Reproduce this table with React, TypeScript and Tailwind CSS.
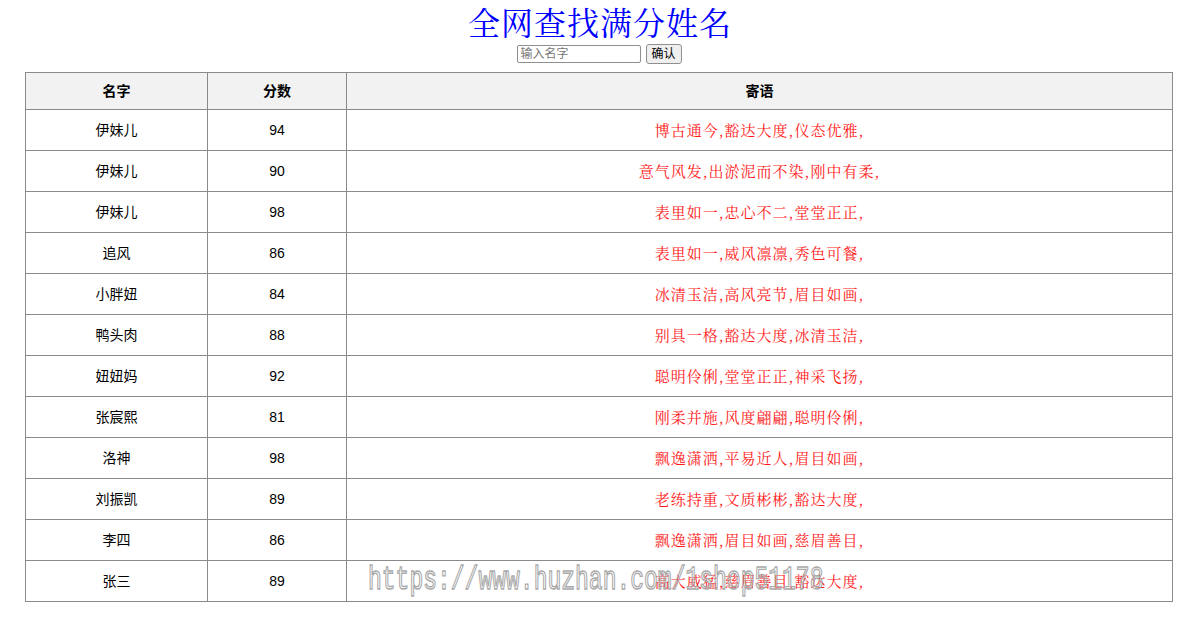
import { useState } from 'react';

interface Row {
  name: string;
  score: number;
  words: string;
}

const rows: Row[] = [
  { name: '伊妹儿', score: 94, words: '博古通今,豁达大度,仪态优雅,' },
  { name: '伊妹儿', score: 90, words: '意气风发,出淤泥而不染,刚中有柔,' },
  { name: '伊妹儿', score: 98, words: '表里如一,忠心不二,堂堂正正,' },
  { name: '追风', score: 86, words: '表里如一,威风凛凛,秀色可餐,' },
  { name: '小胖妞', score: 84, words: '冰清玉洁,高风亮节,眉目如画,' },
  { name: '鸭头肉', score: 88, words: '别具一格,豁达大度,冰清玉洁,' },
  { name: '妞妞妈', score: 92, words: '聪明伶俐,堂堂正正,神采飞扬,' },
  { name: '张宸熙', score: 81, words: '刚柔并施,风度翩翩,聪明伶俐,' },
  { name: '洛神', score: 98, words: '飘逸潇洒,平易近人,眉目如画,' },
  { name: '刘振凯', score: 89, words: '老练持重,文质彬彬,豁达大度,' },
  { name: '李四', score: 86, words: '飘逸潇洒,眉目如画,慈眉善目,' },
  { name: '张三', score: 89, words: '高大威猛,慈眉善目,豁达大度,' },
];

const App = () => {
  const [query, setQuery] = useState('');

  return (
    <div className="relative w-[1200px] h-[628px] bg-white overflow-hidden font-['Liberation_Sans','Noto_Sans_CJK_SC',sans-serif] text-black">
      {/* Title */}
      <h1 className="text-center text-[32px] leading-[42px] text-[#0000ff] font-['Noto_Serif_CJK_SC','Noto_Sans_CJK_SC',serif] tracking-[1px]">
        全网查找满分姓名
      </h1>

      {/* Search */}
      <div className="flex justify-center items-center gap-[5px] h-[24px] pr-[2px]">
        <input
          value={query}
          onChange={(e) => setQuery(e.target.value)}
          placeholder="输入名字"
          className="w-[124px] h-[18px] border border-[#8f8f8f] rounded-[2px] px-[3px] text-[12px] leading-[16px] placeholder:text-[#777]"
        />
        <button className="w-[36px] h-[20px] border border-[#8f8f8f] rounded-[3px] bg-[#efefef] text-[12px] leading-[18px]">
          确认
        </button>
      </div>

      {/* Table */}
      <div className="ml-[25px] mt-[6px] w-[1148px]">
        <table className="w-full border-collapse border border-[#8a8a8a] text-[14px]">
          <thead>
            <tr className="h-[37px] bg-[#f2f2f2]">
              <th className="w-[182px] border border-[#8a8a8a] font-bold">名字</th>
              <th className="w-[139px] border border-[#8a8a8a] font-bold">分数</th>
              <th className="border border-[#8a8a8a] font-bold">寄语</th>
            </tr>
          </thead>
          <tbody>
            {rows.map((row, i) => (
              <tr key={i} className="h-[41px]">
                <td className="border border-[#8a8a8a] text-center">{row.name}</td>
                <td className="border border-[#8a8a8a] text-center">{row.score}</td>
                <td className="border border-[#8a8a8a] text-center text-[15px] tracking-[1px] text-[#ff1a1a] font-['Noto_Serif_CJK_SC','Noto_Sans_CJK_SC',serif]">
                  {row.words}
                </td>
              </tr>
            ))}
          </tbody>
        </table>
      </div>

      {/* Watermark overlay */}
      <div className="absolute left-[368px] top-[573px] text-[23px] leading-[28px] font-['Liberation_Mono',monospace] text-transparent [-webkit-text-stroke:1px_#aaaaaa] scale-y-[1.45] origin-bottom pointer-events-none">
        https://www.huzhan.com/1shop51178
      </div>
    </div>
  );
};

export default App;
